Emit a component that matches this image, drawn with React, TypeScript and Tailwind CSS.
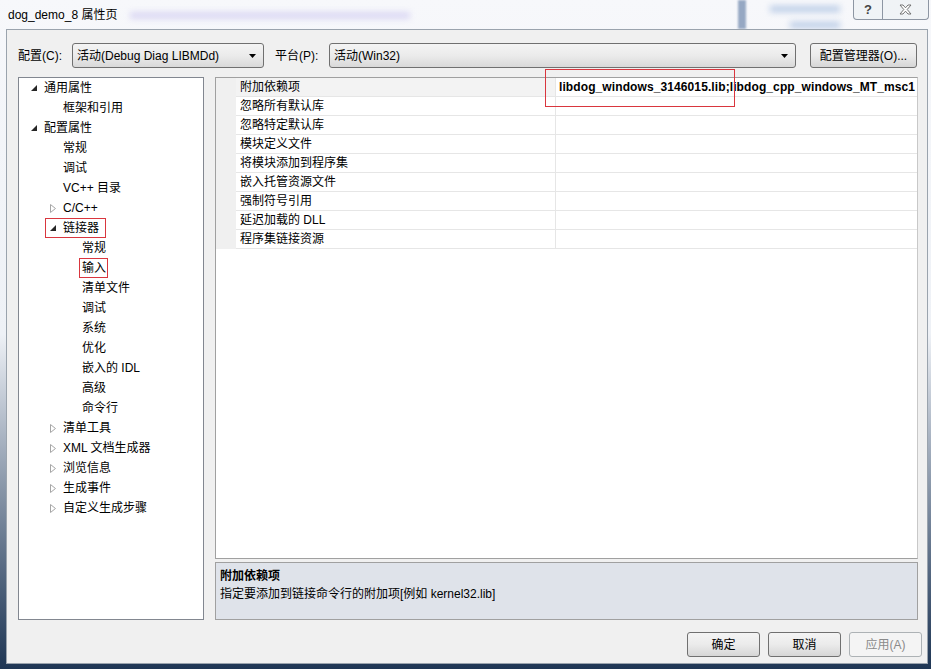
import React from 'react';

const FONT = "font-['Segoe_UI','Liberation_Sans','Noto_Sans_CJK_SC',sans-serif]";

type TreeItem = {
  label: string;
  level: 0 | 1 | 2;
  tri?: 'open' | 'closed';
  mark?: 'linker' | 'input';
};

const TREE: TreeItem[] = [
  { label: '通用属性', level: 0, tri: 'open' },
  { label: '框架和引用', level: 1 },
  { label: '配置属性', level: 0, tri: 'open' },
  { label: '常规', level: 1 },
  { label: '调试', level: 1 },
  { label: 'VC++ 目录', level: 1 },
  { label: 'C/C++', level: 1, tri: 'closed' },
  { label: '链接器', level: 1, tri: 'open', mark: 'linker' },
  { label: '常规', level: 2 },
  { label: '输入', level: 2, mark: 'input' },
  { label: '清单文件', level: 2 },
  { label: '调试', level: 2 },
  { label: '系统', level: 2 },
  { label: '优化', level: 2 },
  { label: '嵌入的 IDL', level: 2 },
  { label: '高级', level: 2 },
  { label: '命令行', level: 2 },
  { label: '清单工具', level: 1, tri: 'closed' },
  { label: 'XML 文档生成器', level: 1, tri: 'closed' },
  { label: '浏览信息', level: 1, tri: 'closed' },
  { label: '生成事件', level: 1, tri: 'closed' },
  { label: '自定义生成步骤', level: 1, tri: 'closed' },
];

const PROPS = [
  '附加依赖项',
  '忽略所有默认库',
  '忽略特定默认库',
  '模块定义文件',
  '将模块添加到程序集',
  '嵌入托管资源文件',
  '强制符号引用',
  '延迟加载的 DLL',
  '程序集链接资源',
];

const INDENT = ['pl-[12px]', 'pl-[31px]', 'pl-[50px]'];

const Triangle = ({ kind }: { kind?: 'open' | 'closed' }) => (
  <span className="w-[13px] h-[20px] flex items-center shrink-0">
    {kind === 'open' && (
      <svg width="6" height="6" viewBox="0 0 6 6">
        <polygon points="6,0 6,6 0,6" fill="#262626" />
      </svg>
    )}
    {kind === 'closed' && (
      <svg width="6" height="9" viewBox="0 0 6 9">
        <polygon points="0.5,0.5 5.5,4.5 0.5,8.5" fill="#fff" stroke="#a6a6a6" />
      </svg>
    )}
  </span>
);

const DropArrow = () => (
  <svg width="7" height="4" viewBox="0 0 7 4" className="shrink-0">
    <polygon points="0,0 7,0 3.5,4" fill="#000" />
  </svg>
);

const Combo = ({ text, className }: { text: string; className: string }) => (
  <div
    className={`${className} shrink-0 h-[25px] flex items-center justify-between pl-[4px] pr-[7px] border border-[#707070] rounded-[3px] bg-linear-to-b from-[#f4f4f4] via-[#ebebeb] to-[#d9d9d9] text-[12px] text-black`}
  >
    <span>{text}</span>
    <DropArrow />
  </div>
);

const WinButton = ({ text, disabled, className = '' }: { text: string; disabled?: boolean; className?: string }) => (
  <div
    className={
      disabled
        ? `${className} shrink-0 h-[25px] flex items-center justify-center border border-[#adb2b5] rounded-[3px] bg-[#f4f4f4] text-[#8a8a8a] text-[12px]`
        : `${className} shrink-0 h-[25px] flex items-center justify-center border border-[#707070] rounded-[3px] bg-linear-to-b from-[#f4f4f4] via-[#ebebeb] to-[#d6d6d6] text-black text-[12px]`
    }
  >
    {text}
  </div>
);

export default function App() {
  return (
    <div
      className={`${FONT} relative w-[931px] h-[669px] overflow-hidden flex flex-col bg-linear-to-b from-[#f7f8fb] via-[#eef1f6] to-[#1f3654]`}
    >
      {/* glass blur behind the title bar */}
      <div className="absolute left-[130px] top-[12px] w-[280px] h-[7px] bg-[#cfcaf0] blur-[3px] opacity-70" />
      <div className="absolute left-[738px] top-0 w-[8px] h-[29px] bg-[#7f95b6] blur-[1px] opacity-80" />
      <div className="absolute left-[770px] top-[6px] w-[70px] h-[6px] bg-[#b9cbe6] blur-[3px]" />
      <div className="absolute left-[790px] top-[22px] w-[50px] h-[6px] bg-[#b9cbe6] blur-[3px]" />

      {/* title bar */}
      <div className="relative h-[29px] shrink-0 flex items-start justify-between">
        <div className="pl-[8px] pt-[6px] text-[12px] text-black">dog_demo_8 属性页</div>
        <div className="flex mr-[2px]">
          <div className="w-[30px] h-[20px] border border-t-0 border-[#8d96a3] rounded-bl-[4px] bg-[#eef1f5]/80 flex items-center justify-center text-[13px] text-[#444] font-bold">
            ?
          </div>
          <div className="w-[46px] h-[20px] border border-t-0 border-l-0 border-[#8d96a3] rounded-br-[4px] bg-[#eef1f5]/80 flex items-center justify-center">
            <svg width="13" height="11" viewBox="0 0 13 11">
              <path
                d="M1,1 L4,1 L6.5,3.8 L9,1 L12,1 L8.2,5.5 L12,10 L9,10 L6.5,7.2 L4,10 L1,10 L4.8,5.5 Z"
                fill="#fff"
                stroke="#666"
                strokeWidth="0.9"
              />
            </svg>
          </div>
        </div>
      </div>

      {/* dialog body */}
      <div className="relative flex-1 ml-[6px] mr-[3px] mb-[5px] bg-[#f0f0f0] border border-[#9aa3ad] flex flex-col pl-[11px] pr-[5px] pt-[13px]">
        {/* config row */}
        <div className="flex items-center h-[25px] text-[12px] text-black">
          <span className="w-[54px] shrink-0">配置(C):</span>
          <Combo text="活动(Debug Diag LIBMDd)" className="w-[192px]" />
          <span className="ml-[11px] w-[54px] shrink-0">平台(P):</span>
          <Combo text="活动(Win32)" className="w-[467px]" />
          <WinButton text="配置管理器(O)..." className="ml-[14px] w-[107px]" />
        </div>

        {/* main area */}
        <div className="flex mt-[9px] h-[543px] mr-[4px]">
          {/* tree */}
          <div className="w-[186px] shrink-0 h-full bg-white border border-[#828790] text-[12px] text-black">
            {TREE.map((item, i) => (
              <div key={i} className={`h-[20px] flex items-center ${INDENT[item.level]}`}>
                {item.mark === 'linker' ? (
                  <span className="-ml-[5px] pl-[4px] pr-[6px] h-[20px] flex items-center border border-[#d9363e]">
                    <Triangle kind={item.tri} />
                    <span>{item.label}</span>
                  </span>
                ) : item.mark === 'input' ? (
                  <>
                    <Triangle kind={item.tri} />
                    <span className="-ml-[3px] pl-[2px] pr-[1px] h-[20px] flex items-center border border-[#d9363e]">
                      {item.label}
                    </span>
                  </>
                ) : (
                  <>
                    <Triangle kind={item.tri} />
                    <span className="whitespace-nowrap">{item.label}</span>
                  </>
                )}
              </div>
            ))}
          </div>

          {/* property grid + description */}
          <div className="flex-1 min-w-0 ml-[11px] flex flex-col">
            <div className="relative h-[482px] bg-white border border-[#a0a0a0] border-r-[#c8c8c8] text-[12px] text-black">
              {PROPS.map((p, i) => (
                <div key={i} className="flex h-[19px]">
                  <div className="w-[20px] shrink-0 bg-[#f0f0f0]" />
                  <div
                    className={`w-[320px] shrink-0 border-b border-r border-[#e6e6e6] pl-[4px] flex items-center whitespace-nowrap ${
                      i === 0 ? 'bg-[#f3f3f3]' : ''
                    }`}
                  >
                    {p}
                  </div>
                  <div className="flex-1 min-w-0 border-b border-[#e6e6e6] pl-[3px] flex items-center overflow-hidden whitespace-nowrap">
                    {i === 0 && (
                      <span className="font-['Liberation_Sans',sans-serif] font-bold text-[12px] tracking-[0.1px]">
                        libdog_windows_3146015.lib;libdog_cpp_windows_MT_msc1
                      </span>
                    )}
                  </div>
                </div>
              ))}
              {/* annotation box */}
              <div className="absolute left-[329px] -top-[9px] w-[190px] h-[38px] border border-[#d9363e]" />
            </div>
            <div className="mt-[3px] flex-1 bg-[#dfe3ea] border border-[#a0a0a0] px-[4px] pt-[4px] text-[12px] text-black leading-[18px]">
              <div className="font-bold">附加依赖项</div>
              <div>指定要添加到链接命令行的附加项[例如 kernel32.lib]</div>
            </div>
          </div>
        </div>

        {/* buttons */}
        <div className="flex justify-end gap-[8px] mt-[12px]">
          <WinButton text="确定" className="w-[73px]" />
          <WinButton text="取消" className="w-[73px]" />
          <WinButton text="应用(A)" disabled className="w-[73px]" />
        </div>
      </div>
    </div>
  );
}
